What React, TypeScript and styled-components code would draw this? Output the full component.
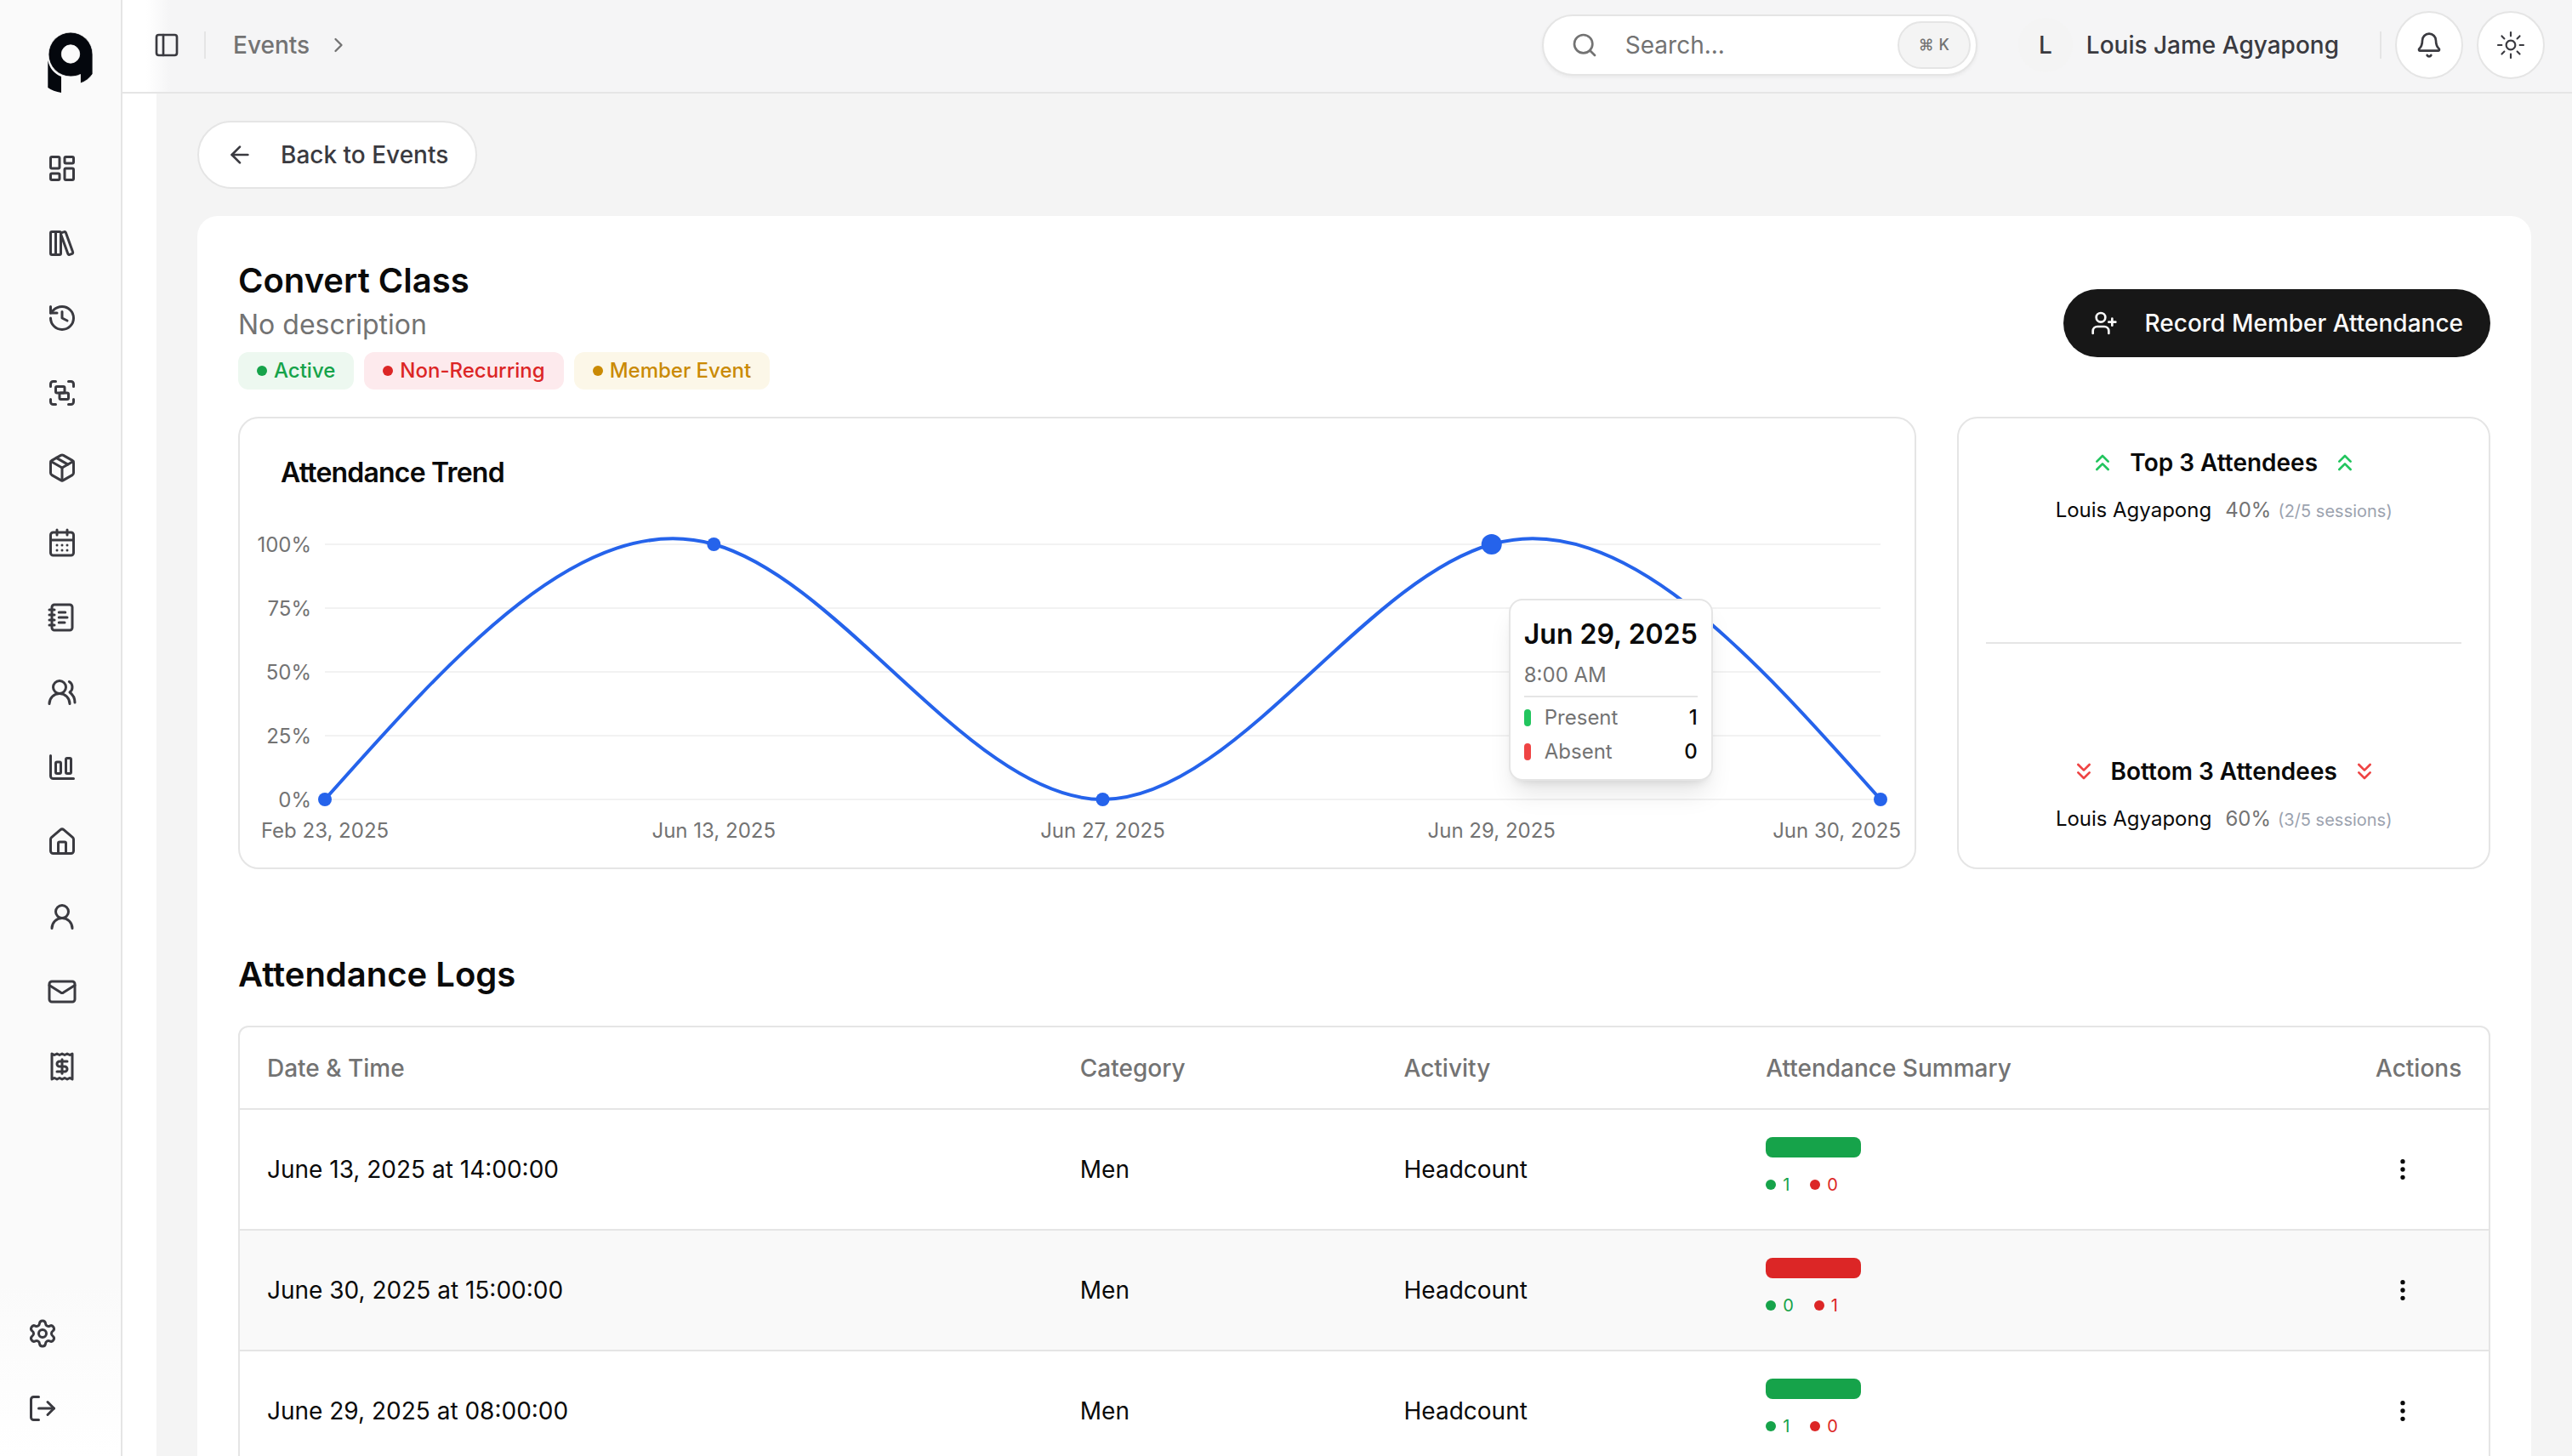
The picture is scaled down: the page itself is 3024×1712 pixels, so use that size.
import React, { useLayoutEffect, useRef, useState } from "react";
import styled, { createGlobalStyle } from "styled-components";
import {
  ArrowLeft,
  Bell,
  CalendarDays,
  ChartColumnBig,
  ChevronRight,
  ChevronsDown,
  ChevronsUp,
  EllipsisVertical,
  Group,
  History,
  House,
  LayoutDashboard,
  LibraryBig,
  LogOut,
  Mail,
  NotebookText,
  Package,
  PanelLeft,
  Receipt,
  Search,
  Settings,
  UserPlus,
  UserRound,
  UsersRound,
} from "lucide-react";
import { RxSun } from "react-icons/rx";

const color = {
  text: "#0a0a0a",
  soft: "#3a3a40",
  muted: "#737373",
  faint: "#9ca3af",
  line: "#e5e5e5",
  canvas: "#f4f4f4",
  green: "#16a34a",
  red: "#dc2626",
  blue: "#2563eb",
};

const GlobalStyle = createGlobalStyle`
  *, *::before, *::after { box-sizing: border-box; }
  body {
    margin: 0;
    overflow: hidden;
    background: #fff;
    color: ${color.text};
    font-family: Inter, "Liberation Sans", sans-serif;
    font-size: 28px;
    line-height: 40px;
  }
  h1, h2, h3, p, ul { margin: 0; padding: 0; }
  ul { list-style: none; }
  button, input { font: inherit; color: inherit; }
  button { cursor: pointer; }
  svg { flex-shrink: 0; }
`;

/* ---------- Shell ---------- */

const Shell = styled.div`
  display: grid;
  grid-template-columns: 144px minmax(0, 1fr);
  height: 100vh;
`;

const Sidebar = styled.aside`
  display: flex;
  flex-direction: column;
  border-right: 2px solid ${color.line};
  background: #fafafa;
`;

const Brand = styled.a`
  display: block;
  height: 166px;
  padding: 36px 0 0 56px;
`;

const Nav = styled.nav`
  display: flex;
  flex-direction: column;
  gap: 24px;
  padding-left: 41px;
`;

const FooterNav = styled(Nav)`
  margin-top: auto;
  padding: 24px 0 24px 18px;
  background: linear-gradient(#fafafa, #ffffff);
`;

const NavLink = styled.a`
  display: flex;
  align-items: center;
  justify-content: center;
  width: 64px;
  height: 64px;
  border-radius: 12px;
  color: ${color.soft};
`;

const Column = styled.div`
  display: flex;
  flex-direction: column;
  min-height: 0;
`;

const TopBar = styled.header`
  display: flex;
  flex-shrink: 0;
  align-items: center;
  justify-content: space-between;
  height: 110px;
  padding: 0 32px 2px 20px;
  border-bottom: 2px solid ${color.line};
  background: linear-gradient(to right, #ffffff 28px, #f5f5f6 56px);
  color: ${color.soft};
  font-weight: 500;
`;

const Cluster = styled.div<{ $gap: number }>`
  display: flex;
  align-items: center;
  gap: ${(p) => p.$gap}px;
`;

const BareButton = styled.button`
  display: flex;
  align-items: center;
  justify-content: center;
  width: 64px;
  height: 64px;
  padding: 0;
  border: 0;
  border-radius: 12px;
  background: transparent;
`;

const Rule = styled.span`
  width: 2px;
  height: 32px;
  background: ${color.line};
`;

const Crumbs = styled.nav`
  display: flex;
  align-items: center;
  gap: 20px;
  padding-left: 20px;
  color: ${color.muted};

  a {
    color: inherit;
    text-decoration: none;
  }
`;

const SearchBox = styled.label`
  display: flex;
  align-items: center;
  gap: 32px;
  width: 512px;
  height: 72px;
  padding: 0 6px 0 32px;
  border: 2px solid ${color.line};
  border-radius: 36px;
  background: #fff;
  box-shadow: 0 2px 4px rgba(0, 0, 0, 0.05);
  color: ${color.muted};
  font-weight: 400;
`;

const SearchInput = styled.input`
  flex: 1;
  min-width: 0;
  padding: 0;
  border: 0;
  outline: 0;
  background: transparent;

  &::placeholder {
    color: ${color.muted};
    opacity: 1;
  }
`;

const Shortcut = styled.kbd`
  display: flex;
  align-items: center;
  justify-content: center;
  gap: 6px;
  width: 86px;
  height: 56px;
  border: 2px solid ${color.line};
  border-radius: 28px;
  background: ${color.canvas};
  font-family: Inter, "DejaVu Sans", sans-serif;
  font-size: 18px;
  font-weight: 500;
`;

const Account = styled.button`
  display: flex;
  align-items: center;
  gap: 16px;
  margin: 0 32px 0 32px;
  padding: 0;
  border: 0;
  background: transparent;
  font-weight: 500;
`;

const Avatar = styled.span`
  display: flex;
  align-items: center;
  justify-content: center;
  width: 64px;
  height: 64px;
  border-radius: 50%;
  background: ${color.canvas};
`;

const RoundButton = styled.button`
  display: flex;
  align-items: center;
  justify-content: center;
  width: 80px;
  height: 80px;
  padding: 0;
  border: 2px solid ${color.line};
  border-radius: 50%;
  background: #fff;
`;

/* ---------- Page ---------- */

const Main = styled.main`
  flex: 1;
  min-height: 0;
  margin-left: 40px;
  padding: 32px 48px;
  overflow: hidden;
  background: ${color.canvas};
`;

const Pill = styled.button<{ $dark?: boolean }>`
  display: flex;
  align-items: center;
  gap: 32px;
  height: 80px;
  padding: 0 32px;
  border: ${(p) => (p.$dark ? "0" : `2px solid ${color.line}`)};
  border-radius: 40px;
  background: ${(p) => (p.$dark ? "#171717" : "#fff")};
  color: ${(p) => (p.$dark ? "#fafafa" : color.soft)};
  font-weight: 500;
`;

const Card = styled.section`
  margin-top: 32px;
  padding: 48px;
  border-radius: 24px;
  background: #fff;
`;

const CardHead = styled.div`
  display: flex;
  align-items: center;
  justify-content: space-between;
`;

const Title = styled.h1`
  font-size: 40px;
  font-weight: 600;
  line-height: 56px;
`;

const SectionTitle = styled(Title).attrs({ as: "h2" })`
  margin: 96px 0 32px;
`;

const Description = styled.p`
  color: ${color.muted};
  font-size: 32px;
  line-height: 48px;
`;

const Tags = styled.ul`
  display: flex;
  gap: 12px;
  margin-top: 8px;
`;

const Tag = styled.li<{ $fg: string; $bg: string }>`
  display: flex;
  align-items: center;
  gap: 8px;
  height: 44px;
  padding: 0 22px;
  border-radius: 12px;
  background: ${(p) => p.$bg};
  color: ${(p) => p.$fg};
  font-size: 24px;
  font-weight: 500;
`;

const Dot = styled.span`
  width: 12px;
  height: 12px;
  border-radius: 50%;
  background: currentColor;
`;

const Overview = styled.div`
  display: grid;
  grid-template-columns: 759fr 241fr;
  gap: 48px;
  margin-top: 32px;
`;

const Panel = styled.section`
  min-width: 0;
  border: 2px solid ${color.line};
  border-radius: 24px;
`;

const ChartPanel = styled(Panel)`
  padding: 48px 0 16px;
`;

const PanelTitle = styled.h2`
  padding-left: 48px;
  font-size: 32px;
  font-weight: 600;
  line-height: 32px;
  letter-spacing: -0.025em;
`;

const ChartBox = styled.div`
  position: relative;
  height: 400px;
  margin-top: 32px;

  svg {
    display: block;
    width: 100%;
    height: 100%;
  }

  text {
    fill: ${color.muted};
    font-size: 24px;
  }
`;

const Tooltip = styled.div`
  position: absolute;
  top: 100px;
  padding: 16px;
  border: 2px solid ${color.line};
  border-radius: 16px;
  background: #fff;
  box-shadow: 0 20px 30px -6px rgba(0, 0, 0, 0.1), 0 8px 12px -8px rgba(0, 0, 0, 0.14);
  font-size: 24px;
  white-space: nowrap;
`;

const TooltipTitle = styled.p`
  font-size: 32px;
  font-weight: 600;
  line-height: 48px;
`;

const TooltipTime = styled.p`
  padding: 4px 0 4px;
  border-bottom: 2px solid ${color.line};
  color: ${color.muted};
  line-height: 40px;
`;

const TooltipRow = styled.p`
  display: flex;
  align-items: center;
  gap: 16px;
  padding-top: 8px;
  color: ${color.muted};
  line-height: 32px;

  b {
    margin-left: auto;
    color: ${color.text};
    font-weight: 500;
  }
`;

const Swatch = styled.span<{ $color: string }>`
  width: 8px;
  height: 20px;
  border-radius: 4px;
  background: ${(p) => p.$color};
`;

const RankPanel = styled(Panel)`
  display: flex;
  flex-direction: column;
  padding: 32px;
`;

const RankGroup = styled.div<{ $end?: boolean }>`
  display: flex;
  flex: 1;
  flex-direction: column;
  justify-content: ${(p) => (p.$end ? "flex-end" : "flex-start")};
  gap: 16px;
  padding-bottom: 4px;
  border-top: ${(p) => (p.$end ? `2px solid ${color.line}` : "0")};
`;

const RankTitle = styled.h3<{ $icon: string }>`
  display: flex;
  align-items: center;
  justify-content: center;
  gap: 16px;
  font-size: 28px;
  font-weight: 600;

  svg {
    color: ${(p) => p.$icon};
  }
`;

const RankRow = styled.p`
  display: flex;
  align-items: baseline;
  justify-content: center;
  font-size: 24px;

  span {
    margin-left: 16px;
    color: ${color.muted};
  }

  small {
    margin-left: 8px;
    color: ${color.faint};
    font-size: 20px;
  }
`;

/* ---------- Table ---------- */

const TableFrame = styled.div`
  overflow: hidden;
  border: 2px solid ${color.line};
  border-radius: 12px;
`;

const Table = styled.table`
  width: 100%;
  border-collapse: collapse;
  table-layout: fixed;
`;

const Th = styled.th<{ $width: string; $right?: boolean }>`
  width: ${(p) => p.$width};
  height: 96px;
  padding: 0 32px;
  border-bottom: 2px solid ${color.line};
  color: ${color.muted};
  font-weight: 500;
  text-align: ${(p) => (p.$right ? "right" : "left")};
`;

const Tr = styled.tr`
  border-bottom: 2px solid ${color.line};

  &:nth-child(even) {
    background: #f9f9f9;
  }
`;

const Td = styled.td`
  height: 142px;
  padding: 0 32px;
`;

const Summary = styled.div`
  display: flex;
  flex-direction: column;
  gap: 16px;
  padding-bottom: 4px;
`;

const Bar = styled.div`
  display: flex;
  width: 112px;
  height: 24px;
  overflow: hidden;
  border-radius: 8px;
`;

const BarPart = styled.span<{ $share: number; $color: string }>`
  flex: ${(p) => p.$share} 0 0;
  background: ${(p) => p.$color};
`;

const Legend = styled.div`
  display: flex;
  gap: 24px;
  font-size: 20px;
  line-height: 32px;
`;

const Count = styled.span<{ $color: string }>`
  display: flex;
  align-items: center;
  gap: 8px;
  color: ${(p) => p.$color};
`;

const RowMenu = styled(BareButton)`
  color: ${color.text};
`;

/* ---------- Data ---------- */

const navItems = [
  { label: "Dashboard", icon: LayoutDashboard },
  { label: "Library", icon: LibraryBig },
  { label: "History", icon: History },
  { label: "Groups", icon: Group },
  { label: "Assets", icon: Package },
  { label: "Events", icon: CalendarDays },
  { label: "Notes", icon: NotebookText },
  { label: "Members", icon: UsersRound },
  { label: "Reports", icon: ChartColumnBig },
  { label: "Home", icon: House },
  { label: "Profile", icon: UserRound },
  { label: "Messages", icon: Mail },
  { label: "Finance", icon: Receipt },
];

const footerItems = [
  { label: "Settings", icon: Settings },
  { label: "Log out", icon: LogOut },
];

const tags = [
  { label: "Active", fg: color.green, bg: "#edf8f0" },
  { label: "Non-Recurring", fg: color.red, bg: "#fdeaed" },
  { label: "Member Event", fg: "#ca8a04", bg: "#fcf7e8" },
];

const trend = [
  { date: "Feb 23, 2025", rate: 0 },
  { date: "Jun 13, 2025", rate: 100 },
  { date: "Jun 27, 2025", rate: 0 },
  { date: "Jun 29, 2025", rate: 100 },
  { date: "Jun 30, 2025", rate: 0 },
];

const logs = [
  { when: "June 13, 2025 at 14:00:00", category: "Men", activity: "Headcount", present: 1, absent: 0 },
  { when: "June 30, 2025 at 15:00:00", category: "Men", activity: "Headcount", present: 0, absent: 1 },
  { when: "June 29, 2025 at 08:00:00", category: "Men", activity: "Headcount", present: 1, absent: 0 },
];

/* ---------- Chart ---------- */

/** Control values of a natural cubic spline along one axis. */
function controlPoints(v: number[]): [number[], number[]] {
  const n = v.length - 1;
  const a: number[] = new Array(n);
  const b: number[] = new Array(n);
  const r: number[] = new Array(n);
  a[0] = 0;
  b[0] = 2;
  r[0] = v[0] + 2 * v[1];
  for (let i = 1; i < n - 1; i++) {
    a[i] = 1;
    b[i] = 4;
    r[i] = 4 * v[i] + 2 * v[i + 1];
  }
  a[n - 1] = 2;
  b[n - 1] = 7;
  r[n - 1] = 8 * v[n - 1] + v[n];
  for (let i = 1; i < n; i++) {
    const m = a[i] / b[i - 1];
    b[i] -= m;
    r[i] -= m * r[i - 1];
  }
  a[n - 1] = r[n - 1] / b[n - 1];
  for (let i = n - 2; i >= 0; i--) a[i] = (r[i] - a[i + 1]) / b[i];
  b[n - 1] = (v[n] + a[n - 1]) / 2;
  for (let i = 0; i < n - 1; i++) b[i] = 2 * v[i + 1] - a[i + 1];
  return [a, b];
}

function naturalPath(xs: number[], ys: number[]): string {
  const [ax, bx] = controlPoints(xs);
  const [ay, by] = controlPoints(ys);
  let d = `M${xs[0]},${ys[0]}`;
  for (let i = 1; i < xs.length; i++) {
    d += `C${ax[i - 1]},${ay[i - 1]},${bx[i - 1]},${by[i - 1]},${xs[i]},${ys[i]}`;
  }
  return d;
}

const plot = { left: 100, right: 40, top: 36, bottom: 336 };

function TrendChart() {
  const box = useRef<HTMLDivElement>(null);
  const [width, setWidth] = useState(0);
  const active = 3;

  useLayoutEffect(() => {
    const el = box.current;
    if (!el) return;
    const measure = () => setWidth(el.clientWidth);
    measure();
    const observer = new ResizeObserver(measure);
    observer.observe(el);
    return () => observer.disconnect();
  }, []);

  const end = width - plot.right;
  const step = (end - plot.left) / (trend.length - 1);
  const xs = trend.map((_, i) => plot.left + step * i);
  const toY = (rate: number) => plot.bottom - ((plot.bottom - plot.top) * rate) / 100;
  const ys = trend.map((p) => toY(p.rate));

  return (
    <ChartBox ref={box}>
      {width > 0 && (
        <>
          <svg role="img" aria-label="Attendance trend">
            {[0, 25, 50, 75, 100].map((rate) => (
              <g key={rate}>
                <line x1={plot.left} x2={end} y1={toY(rate)} y2={toY(rate)} stroke="#f2f2f2" strokeWidth={2} />
                <text x={plot.left - 16} y={toY(rate) + 9} textAnchor="end">
                  {rate}%
                </text>
              </g>
            ))}
            {trend.map((p, i) => {
              const last = i === trend.length - 1;
              return (
                <text key={p.date} x={last ? width - 16 : xs[i]} y={381} textAnchor={last ? "end" : "middle"}>
                  {p.date}
                </text>
              );
            })}
            <path d={naturalPath(xs, ys)} fill="none" stroke={color.blue} strokeWidth={4} />
            {xs.map((x, i) => (
              <circle key={trend[i].date} cx={x} cy={ys[i]} r={i === active ? 12 : 8} fill={color.blue} />
            ))}
          </svg>
          <Tooltip role="status" style={{ left: xs[active] + 20 }}>
            <TooltipTitle>Jun 29, 2025</TooltipTitle>
            <TooltipTime>8:00 AM</TooltipTime>
            <TooltipRow>
              <Swatch $color="#22c55e" />
              Present <b>1</b>
            </TooltipRow>
            <TooltipRow>
              <Swatch $color="#ef4444" />
              Absent <b>0</b>
            </TooltipRow>
          </Tooltip>
        </>
      )}
    </ChartBox>
  );
}

function Logo() {
  return (
    <svg width="54" height="74" viewBox="0 0 54 74" fill="#04070d" aria-hidden="true">
      <path d="M.3 35C2 44 8 51 16 54V73C10 72 4 70 .3 67Z" />
      <path
        fillRule="evenodd"
        stroke="#fafafa"
        strokeWidth=".8"
        d="M27 54A26 26 0 1 1 53 28V51C49.500 56 44.500 60 38.500 62V51.500C35 53.300 31 54 27 54ZM27 16.800A10.700 10.700 0 1 0 27 38.200A10.700 10.700 0 1 0 27 16.800Z"
      />
    </svg>
  );
}

export default function App() {
  return (
    <>
      <GlobalStyle />
      <Shell>
        <Sidebar>
          <Brand href="#" aria-label="Home page">
            <Logo />
          </Brand>
          <Nav aria-label="Main">
            {navItems.map(({ label, icon: Icon }) => (
              <NavLink key={label} href="#" aria-label={label}>
                <Icon size={36} />
              </NavLink>
            ))}
          </Nav>
          <FooterNav aria-label="Account">
            {footerItems.map(({ label, icon: Icon }) => (
              <NavLink key={label} href="#" aria-label={label}>
                <Icon size={36} />
              </NavLink>
            ))}
          </FooterNav>
        </Sidebar>

        <Column>
          <TopBar>
            <Cluster $gap={12}>
              <BareButton aria-label="Toggle sidebar">
                <PanelLeft size={32} />
              </BareButton>
              <Rule />
              <Crumbs aria-label="Breadcrumb">
                <a href="#">Events</a>
                <ChevronRight size={28} />
              </Crumbs>
            </Cluster>
            <Cluster $gap={16}>
              <SearchBox>
                <Search size={32} />
                <SearchInput type="text" placeholder="Search..." aria-label="Search" />
                <Shortcut>
                  <span>⌘</span>
                  <span>K</span>
                </Shortcut>
              </SearchBox>
              <Account>
                <Avatar>L</Avatar>
                Louis Jame Agyapong
              </Account>
              <Rule />
              <RoundButton aria-label="Notifications">
                <Bell size={32} />
              </RoundButton>
              <RoundButton aria-label="Toggle theme">
                <RxSun size={32} />
              </RoundButton>
            </Cluster>
          </TopBar>

          <Main>
            <Pill>
              <ArrowLeft size={32} />
              Back to Events
            </Pill>

            <Card>
              <CardHead>
                <div>
                  <Title>Convert Class</Title>
                  <Description>No description</Description>
                  <Tags>
                    {tags.map((t) => (
                      <Tag key={t.label} $fg={t.fg} $bg={t.bg}>
                        <Dot />
                        {t.label}
                      </Tag>
                    ))}
                  </Tags>
                </div>
                <Pill $dark>
                  <UserPlus size={32} />
                  Record Member Attendance
                </Pill>
              </CardHead>

              <Overview>
                <ChartPanel>
                  <PanelTitle>Attendance Trend</PanelTitle>
                  <TrendChart />
                </ChartPanel>
                <RankPanel>
                  <RankGroup>
                    <RankTitle $icon="#22c55e">
                      <ChevronsUp size={32} />
                      Top 3 Attendees
                      <ChevronsUp size={32} />
                    </RankTitle>
                    <RankRow>
                      Louis Agyapong <span>40%</span> <small>(2/5 sessions)</small>
                    </RankRow>
                  </RankGroup>
                  <RankGroup $end>
                    <RankTitle $icon="#ef4444">
                      <ChevronsDown size={32} />
                      Bottom 3 Attendees
                      <ChevronsDown size={32} />
                    </RankTitle>
                    <RankRow>
                      Louis Agyapong <span>60%</span> <small>(3/5 sessions)</small>
                    </RankRow>
                  </RankGroup>
                </RankPanel>
              </Overview>

              <SectionTitle>Attendance Logs</SectionTitle>
              <TableFrame>
                <Table>
                  <thead>
                    <tr>
                      <Th $width="36.15%">Date &amp; Time</Th>
                      <Th $width="14.4%">Category</Th>
                      <Th $width="16.1%">Activity</Th>
                      <Th $width="auto">Attendance Summary</Th>
                      <Th $width="165px" $right>
                        Actions
                      </Th>
                    </tr>
                  </thead>
                  <tbody>
                    {logs.map((log) => (
                      <Tr key={log.when}>
                        <Td>{log.when}</Td>
                        <Td>{log.category}</Td>
                        <Td>{log.activity}</Td>
                        <Td>
                          <Summary>
                            <Bar>
                              <BarPart $share={log.present} $color={color.green} />
                              <BarPart $share={log.absent} $color={color.red} />
                            </Bar>
                            <Legend>
                              <Count $color={color.green}>
                                <Dot />
                                {log.present}
                              </Count>
                              <Count $color={color.red}>
                                <Dot />
                                {log.absent}
                              </Count>
                            </Legend>
                          </Summary>
                        </Td>
                        <Td>
                          <RowMenu aria-label={`Actions for ${log.when}`}>
                            <EllipsisVertical size={32} />
                          </RowMenu>
                        </Td>
                      </Tr>
                    ))}
                  </tbody>
                </Table>
              </TableFrame>
            </Card>
          </Main>
        </Column>
      </Shell>
    </>
  );
}
